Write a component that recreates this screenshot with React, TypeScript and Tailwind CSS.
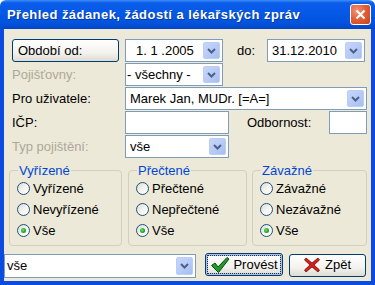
import React from "react";

const font = { fontFamily: '"Liberation Sans", Arial, sans-serif' };

const Arrow = () => (
  <div className="w-[17px] h-[calc(100%-4px)] mr-[2px] shrink-0 rounded-[2px] border border-[#bccdf5] bg-[linear-gradient(135deg,#c6d6fc_0%,#b5c9f7_60%,#a6bdf2_100%)] flex items-center justify-center">
    <svg width="9" height="6" viewBox="0 0 9 6">
      <path d="M1 1 L4.5 4.5 L8 1" fill="none" stroke="#4d6185" strokeWidth="2" />
    </svg>
  </div>
);

type comboProps = { w: string; value: string; pad?: string; h?: string };

const Combo = ({ w, value, pad = "pl-[4px]", h = "h-[23px]" }: comboProps) => (
  <div className={`${w} ${h} shrink-0 bg-white border border-[#7f9db9] flex items-center`}>
    <span className={`flex-1 ${pad} whitespace-pre text-black`}>{value}</span>
    <Arrow />
  </div>
);

const Radio = ({ label, checked }: { label: string; checked?: boolean }) => (
  <div className="h-[21px] flex items-center pl-[7px]">
    <div className="w-[13px] h-[13px] rounded-full border border-[#1c5180] bg-[linear-gradient(135deg,#dcdbd3_0%,#f4f3ee_50%,#ffffff_100%)] flex items-center justify-center shrink-0">
      {checked && (
        <div className="w-[5px] h-[5px] rounded-full bg-[radial-gradient(circle_at_40%_40%,#6fe06f_0%,#21a121_60%,#1a7f1a_100%)]" />
      )}
    </div>
    <span className="ml-[3px]">{label}</span>
  </div>
);

const Group = ({ w, title, items }: { w: string; title: string; items: string[] }) => (
  <fieldset className={`${w} h-[83px] shrink-0 border border-[#d0d0bf] rounded-[4px]`}>
    <legend className="ml-[8px] px-[1px] text-[#0046d5] leading-[15px]">{title}</legend>
    <div className="flex flex-col">
      <Radio label={items[0]} />
      <Radio label={items[1]} />
      <Radio label={items[2]} checked />
    </div>
  </fieldset>
);

const XpButton = ({ w, children, focus }: { w: string; children: React.ReactNode; focus?: boolean }) => (
  <button
    className={`${w} h-[23px] shrink-0 rounded-[3px] border border-[#003c74] bg-[linear-gradient(180deg,#ffffff_0%,#f3f2ee_60%,#dedcd2_100%)] p-[1px] ${focus ? "shadow-[inset_0_0_0_2px_#a9c1f0]" : ""}`}
  >
    <div className={`w-full h-full flex items-center justify-center ${focus ? "border border-dotted border-[#333]" : ""}`}>
      {children}
    </div>
  </button>
);

export default function App() {
  return (
    <div className="w-[375px] h-[285px] flex flex-col text-[13px] text-black select-none" style={font}>
      <div className="h-[29px] shrink-0 rounded-t-[6px] bg-[linear-gradient(180deg,#3d8efc_0%,#0b5ce9_10%,#0459e6_45%,#0353dc_80%,#0245c6_100%)] flex items-center pl-[7px] pr-[4px]">
        <span className="text-white font-bold text-[13px] tracking-[0.45px] [text-shadow:1px_1px_0_#0a3aa0]">
          Přehled žádanek, žádostí a lékařských zpráv
        </span>
        <div className="ml-auto w-[21px] h-[21px] rounded-[3px] border border-white bg-[radial-gradient(circle_at_30%_30%,#f3937a_0%,#e25b32_50%,#c8441c_100%)] flex items-center justify-center">
          <svg width="11" height="11" viewBox="0 0 11 11">
            <path d="M1.5 1.5 L9.5 9.5 M9.5 1.5 L1.5 9.5" stroke="white" strokeWidth="2.2" />
          </svg>
        </div>
      </div>

      <div className="flex-1 flex flex-col bg-[#ece9d8] border-x-4 border-b-4 border-[#0b4be0]">
        <div className="flex flex-col gap-[1px] pt-[10px] pl-[8px]">
          <div className="h-[23px] flex items-center">
            <XpButton w="w-[107px]">
              <span className="w-full text-left pl-[4px]">Období od:</span>
            </XpButton>
            <div className="ml-[6px]">
              <Combo w="w-[98px]" value="1. 1 .2005" pad="pl-[10px]" />
            </div>
            <span className="ml-[14px] w-[30px]">do:</span>
            <Combo w="w-[98px]" value="31.12.2010" />
          </div>
          <div className="h-[23px] flex items-center">
            <span className="w-[113px] text-[#aca899]">Pojišťovny:</span>
            <Combo w="w-[98px]" value="- všechny -" pad="pl-[1px]" />
          </div>
          <div className="h-[23px] flex items-center">
            <span className="w-[113px]">Pro uživatele:</span>
            <Combo w="w-[242px]" value="Marek Jan, MUDr. [=A=]" />
          </div>
          <div className="h-[23px] flex items-center">
            <span className="w-[113px]">IČP:</span>
            <div className="w-[104px] h-[23px] bg-white border border-[#7f9db9]" />
            <span className="ml-[18px] w-[82px]">Odbornost:</span>
            <div className="w-[38px] h-[23px] bg-white border border-[#7f9db9]" />
          </div>
          <div className="h-[23px] flex items-center">
            <span className="w-[113px] text-[#aca899]">Typ pojištění:</span>
            <Combo w="w-[104px]" value="vše" />
          </div>
        </div>

        <div className="flex mt-[5px] pl-[5px]">
          <Group w="w-[113px]" title="Vyřízené" items={["Vyřízené", "Nevyřízené", "Vše"]} />
          <div className="ml-[6px]">
            <Group w="w-[119px]" title="Přečtené" items={["Přečtené", "Nepřečtené", "Vše"]} />
          </div>
          <div className="ml-[5px]">
            <Group w="w-[115px]" title="Závažné" items={["Závažné", "Nezávažné", "Vše"]} />
          </div>
        </div>

        <div className="flex items-center mt-[7px]">
          <Combo w="w-[192px]" h="h-[24px]" value="vše" pad="pl-[2px]" />
          <div className="ml-[9px]">
            <XpButton w="w-[78px]" focus>
              <svg width="20" height="18" viewBox="0 0 20 18" className="mr-[3px]">
                <path d="M1.5 9.5 L5 7 L8 11 L17 1.5 L19 3 L8.5 16.5 Z" fill="#1d9a2a" stroke="#0c4a12" strokeWidth="1" strokeLinejoin="round" />
              </svg>
              <span>Provést</span>
            </XpButton>
          </div>
          <div className="ml-[6px]">
            <XpButton w="w-[77px]">
              <svg width="16" height="16" viewBox="0 0 16 16" className="mr-[5px]">
                <path d="M2 1 L8 6 L14 1 L15.5 3 L10 8 L15.5 13 L14 15 L8 10 L2 15 L0.5 13 L6 8 L0.5 3 Z" fill="#d1201a" stroke="#7a0d0a" strokeWidth="0.8" strokeLinejoin="round" />
              </svg>
              <span>Zpět</span>
            </XpButton>
          </div>
        </div>
      </div>
    </div>
  );
}
